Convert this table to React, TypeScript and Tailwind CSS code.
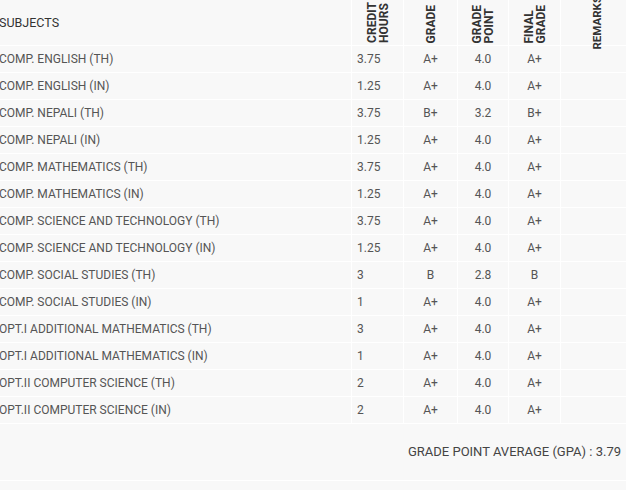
const subjects = [
  { name: "COMP. ENGLISH (TH)", credit: "3.75", grade: "A+", point: "4.0", final: "A+" },
  { name: "COMP. ENGLISH (IN)", credit: "1.25", grade: "A+", point: "4.0", final: "A+" },
  { name: "COMP. NEPALI (TH)", credit: "3.75", grade: "B+", point: "3.2", final: "B+" },
  { name: "COMP. NEPALI (IN)", credit: "1.25", grade: "A+", point: "4.0", final: "A+" },
  { name: "COMP. MATHEMATICS (TH)", credit: "3.75", grade: "A+", point: "4.0", final: "A+" },
  { name: "COMP. MATHEMATICS (IN)", credit: "1.25", grade: "A+", point: "4.0", final: "A+" },
  { name: "COMP. SCIENCE AND TECHNOLOGY (TH)", credit: "3.75", grade: "A+", point: "4.0", final: "A+" },
  { name: "COMP. SCIENCE AND TECHNOLOGY (IN)", credit: "1.25", grade: "A+", point: "4.0", final: "A+" },
  { name: "COMP. SOCIAL STUDIES (TH)", credit: "3", grade: "B", point: "2.8", final: "B" },
  { name: "COMP. SOCIAL STUDIES (IN)", credit: "1", grade: "A+", point: "4.0", final: "A+" },
  { name: "OPT.I ADDITIONAL MATHEMATICS (TH)", credit: "3", grade: "A+", point: "4.0", final: "A+" },
  { name: "OPT.I ADDITIONAL MATHEMATICS (IN)", credit: "1", grade: "A+", point: "4.0", final: "A+" },
  { name: "OPT.II COMPUTER SCIENCE (TH)", credit: "2", grade: "A+", point: "4.0", final: "A+" },
  { name: "OPT.II COMPUTER SCIENCE (IN)", credit: "2", grade: "A+", point: "4.0", final: "A+" },
];

const cols = "grid grid-cols-[358px_52px_54px_51px_52px_80px]";

function VHead({ lines }: { lines: string[] }) {
  return (
    <div className="flex h-[46px] items-end justify-center border-l border-white pb-[3px]">
      <div className="rotate-180 text-[12px] font-bold leading-[12px] text-[#333] [writing-mode:vertical-rl]">
        {lines.map((l) => (
          <div key={l}>{l}</div>
        ))}
      </div>
    </div>
  );
}

export default function App() {
  return (
    <div
      className="h-[490px] w-[626px] overflow-hidden bg-[#f8f8f8]"
      style={{ fontFamily: "Roboto, 'Liberation Sans', sans-serif" }}
    >
      <div className="-ml-[7px] w-[647px]">
        {/* header */}
        <div className={`${cols} h-[46px] grid-rows-[46px] border-b border-white`}>
          <div className="flex items-center pl-[6px] text-[12.5px] text-[#333]">SUBJECTS</div>
          <VHead lines={["CREDIT", "HOURS"]} />
          <VHead lines={["GRADE"]} />
          <VHead lines={["GRADE", "POINT"]} />
          <VHead lines={["FINAL", "GRADE"]} />
          <div className="flex h-[46px] items-end justify-start border-l border-white pl-[30px]">
            <div className="translate-y-[3px] rotate-180 text-[11.5px] font-bold leading-[12px] text-[#333] [writing-mode:vertical-rl]">
              REMARKS
            </div>
          </div>
        </div>

        {/* rows */}
        {subjects.map((s) => (
          <div key={s.name} className={`${cols} h-[27px] border-b border-white text-[12px] text-[#555]`}>
            <div className="flex items-center pl-[6px]">{s.name}</div>
            <div className="flex items-center border-l border-white pl-[5px]">{s.credit}</div>
            <div className="flex items-center justify-center border-l border-white">{s.grade}</div>
            <div className="flex items-center justify-center border-l border-white">{s.point}</div>
            <div className="flex items-center justify-center border-l border-white">{s.final}</div>
            <div className="border-l border-white" />
          </div>
        ))}
      </div>

      {/* GPA */}
      <div className="flex h-[57px] items-center justify-end border-b border-white pr-[5px] text-[13px] text-[#444]">
        GRADE POINT AVERAGE (GPA) : 3.79
      </div>
    </div>
  );
}
